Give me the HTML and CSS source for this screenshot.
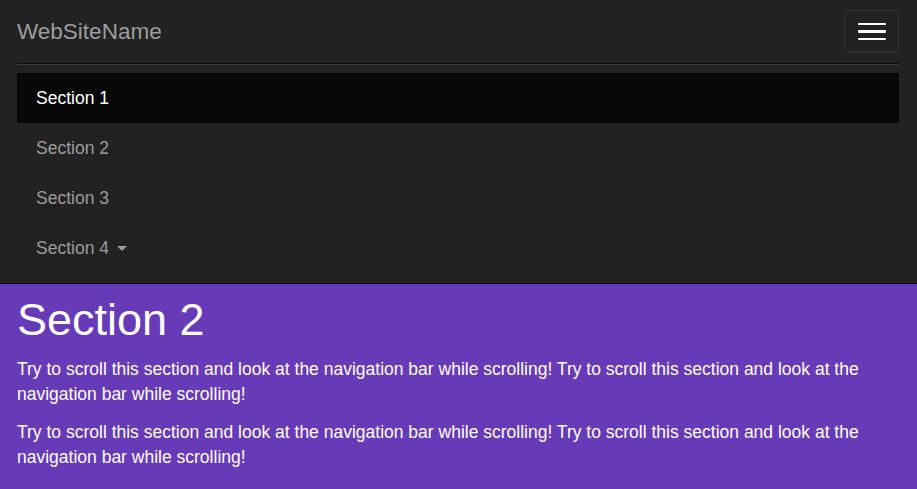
FILE: index.html
```html
<!DOCTYPE html>
<html lang="en">
<head>
<meta charset="utf-8">
<title>WebSiteName</title>
<link rel="stylesheet" href="styles.css">
</head>
<body>
<nav class="navbar">
  <div class="navbar-header">
    <a class="brand" href="#">WebSiteName</a>
    <button class="toggle" type="button" aria-label="Toggle navigation">
      <span class="bar"></span>
      <span class="bar"></span>
      <span class="bar"></span>
    </button>
  </div>
  <div class="collapse">
    <ul class="nav">
      <li class="active"><a href="#">Section 1</a></li>
      <li><a href="#">Section 2</a></li>
      <li><a href="#">Section 3</a></li>
      <li><a href="#">Section 4 <span class="caret"></span></a></li>
    </ul>
  </div>
</nav>
<section class="section">
  <h1>Section 2</h1>
  <p>Try to scroll this section and look at the navigation bar while scrolling! Try to scroll this section and look at the navigation bar while scrolling!</p>
  <p>Try to scroll this section and look at the navigation bar while scrolling! Try to scroll this section and look at the navigation bar while scrolling!</p>
</section>
</body>
</html>
```

FILE: styles.css
```css
* { box-sizing: border-box; }
html, body { margin: 0; padding: 0; }
body {
  font-family: "Liberation Sans", Arial, Helvetica, sans-serif;
  font-size: 17.5px;
  line-height: 25px;
  color: #333;
  background: #673ab7;
  overflow: hidden;
}
.navbar {
  background: #222;
  border-bottom: 1px solid #080808;
}
.navbar-header {
  height: 63px;
  display: flex;
  justify-content: space-between;
  align-items: flex-start;
}
.brand {
  display: block;
  padding: 19px 17px 0 17px;
  font-size: 22.5px;
  line-height: 25px;
  color: #9d9d9d;
  text-decoration: none;
}
.toggle {
  margin: 10px 18px 0 0;
  width: 55px;
  height: 43px;
  padding: 0 14px;
  background: transparent;
  border: 1px solid #333;
  border-radius: 5px;
  display: flex;
  flex-direction: column;
  justify-content: center;
  align-items: center;
  gap: 5px;
}
.bar {
  display: block;
  width: 28px;
  height: 2.5px;
  background: #fff;
  border-radius: 1px;
}
.collapse {
  margin: 0 18px 0 17px;
  border-top: 1px solid #101010;
  box-shadow: inset 0 1px 0 rgba(255,255,255,.1);
}
.nav {
  list-style: none;
  margin: 9px 0 10px;
  padding: 0;
}
.nav a {
  display: block;
  height: 50px;
  padding: 12.5px 19px;
  line-height: 25px;
  color: #9d9d9d;
  text-decoration: none;
}
.nav .active a {
  background: #080808;
  color: #fff;
}
.caret {
  display: inline-block;
  width: 0;
  height: 0;
  margin-left: 3px;
  vertical-align: middle;
  border-top: 5px solid #9d9d9d;
  border-left: 5px solid transparent;
  border-right: 5px solid transparent;
}
.section {
  padding: 11px 18.75px 20px 17px;
  color: #fff;
}
.section h1 {
  margin: 0 0 12.5px;
  font-size: 45px;
  line-height: 49.5px;
  font-weight: 500;
}
.section p {
  margin: 0 0 12.5px;
}
```
